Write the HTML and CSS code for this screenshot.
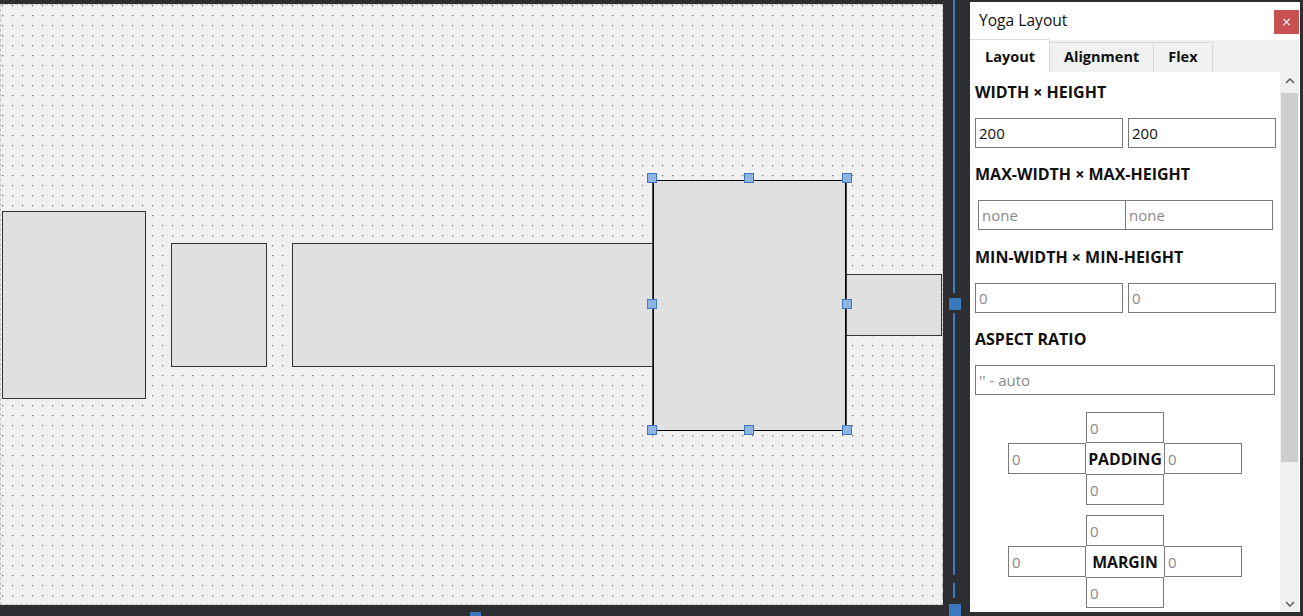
FILE: index.html
```html
<!DOCTYPE html>
<html lang="en">
<head>
<meta charset="utf-8">
<title>Yoga Layout</title>
<link rel="stylesheet" href="styles.css">
</head>
<body>
<div class="app">
  <div class="stage">
    <div class="canvas">
      <div class="node n1"></div>
      <div class="node n2"></div>
      <div class="node n3"></div>
      <div class="node n4 selected"></div>
      <div class="node n5"></div>
      <span class="grip g1"></span>
      <span class="grip g2"></span>
      <span class="grip g3"></span>
      <span class="grip g4"></span>
      <span class="grip g5"></span>
      <span class="grip g6"></span>
      <span class="grip g7"></span>
      <span class="grip g8"></span>
    </div>
    <div class="stage-handle"></div>
  </div>

  <div class="splitter">
    <div class="split-line top"></div>
    <div class="split-handle"></div>
    <div class="split-line mid"></div>
    <div class="split-line dash"></div>
    <div class="split-handle bottom"></div>
  </div>

  <aside class="panel">
    <header class="titlebar">
      <span class="title">Yoga Layout</span>
      <button class="close" type="button">×</button>
    </header>
    <nav class="tabs">
      <div class="tab active">Layout</div>
      <div class="tab">Alignment</div>
      <div class="tab">Flex</div>
    </nav>
    <div class="panel-body">
      <div class="content">
        <div class="label first">WIDTH × HEIGHT</div>
        <div class="pair">
          <input class="field" value="200">
          <input class="field" value="200">
        </div>
        <div class="label">MAX-WIDTH × MAX-HEIGHT</div>
        <div class="pair joined">
          <input class="field" placeholder="none">
          <input class="field" placeholder="none">
        </div>
        <div class="label">MIN-WIDTH × MIN-HEIGHT</div>
        <div class="pair">
          <input class="field" placeholder="0">
          <input class="field" placeholder="0">
        </div>
        <div class="label">ASPECT RATIO</div>
        <input class="field wide" placeholder="'' - auto">

        <div class="cross padding">
          <input class="field c-top" placeholder="0">
          <input class="field c-left" placeholder="0">
          <div class="c-label">PADDING</div>
          <input class="field c-right" placeholder="0">
          <input class="field c-bottom" placeholder="0">
        </div>
        <div class="cross margin">
          <input class="field c-top" placeholder="0">
          <input class="field c-left" placeholder="0">
          <div class="c-label">MARGIN</div>
          <input class="field c-right" placeholder="0">
          <input class="field c-bottom" placeholder="0">
        </div>
      </div>
      <div class="scrollbar">
        <div class="sb-btn">
          <svg width="10" height="6" viewBox="0 0 10 6"><path d="M1 5 L5 1 L9 5" fill="none" stroke="#606060" stroke-width="1.6"/></svg>
        </div>
        <div class="sb-thumb"></div>
        <div class="sb-space"></div>
        <div class="sb-btn">
          <svg width="10" height="6" viewBox="0 0 10 6"><path d="M1 1 L5 5 L9 1" fill="none" stroke="#606060" stroke-width="1.6"/></svg>
        </div>
      </div>
    </div>
  </aside>
</div>
</body>
</html>
```

FILE: styles.css
```css
* { box-sizing: border-box; }

html, body {
  margin: 0;
  padding: 0;
}

body {
  background: #2c2e31;
  font-family: "Open Sans", "Noto Sans", sans-serif;
  width: 1303px;
  height: 616px;
  overflow: hidden;
}

.app {
  display: flex;
  align-items: flex-start;
  height: 616px;
  overflow: hidden;
}

/* ---------- canvas ---------- */
.stage {
  display: flex;
  flex-direction: column;
  width: 943px;
  flex: none;
}

.canvas {
  position: relative;
  margin-top: 4px;
  width: 943px;
  height: 601px;
  background-color: #f0f0f0;
  background-image: radial-gradient(circle at 0.5px 0.5px, #7a7a7a 0.6px, rgba(122,122,122,0) 1.2px);
  background-size: 10px 10px;
  background-position: 1px 0;
  border: 1px dashed #c4c4c4;
}

.stage-handle {
  margin-top: 7px;
  margin-left: 470px;
  width: 11px;
  height: 12px;
  background: #3c78be;
}

.node {
  position: absolute;
  background: #e0e0e0;
  border: 1px solid #333333;
}

.n1 { left: 1px;   top: 206px; width: 144px; height: 188px; }
.n2 { left: 170px; top: 238px; width: 96px;  height: 124px; }
.n3 { left: 291px; top: 238px; width: 362px; height: 124px; }
.n4 { left: 652px; top: 175px; width: 193px; height: 251px; }
.n5 { left: 845px; top: 269px; width: 96px;  height: 62px; }

.node.selected {
  border: 1px solid #000;
  box-shadow: -1px 0 0 #4a4a4a, 1px 0 0 #4a4a4a;
}

.grip {
  position: absolute;
  width: 10px;
  height: 10px;
  background: #8db3e2;
  border: 1px solid #3d78bd;
}
.g1 { left: 646px; top: 168px; }
.g2 { left: 743px; top: 168px; }
.g3 { left: 841px; top: 168px; }
.g4 { left: 646px; top: 294px; }
.g5 { left: 841px; top: 294px; }
.g6 { left: 646px; top: 420px; }
.g7 { left: 743px; top: 420px; }
.g8 { left: 841px; top: 420px; }

/* ---------- splitter ---------- */
.splitter {
  width: 27px;
  height: 616px;
  flex: none;
  display: flex;
  flex-direction: column;
  align-items: flex-start;
}

.split-line {
  margin-left: 10px;
  width: 2px;
  background: #3f7bbf;
}
.split-line.top  { height: 297px; }
.split-line.mid  { margin-top: 3px; height: 266px; }
.split-line.dash { margin-top: 8px; height: 15px; }

.split-handle {
  margin-top: 5px;
  margin-left: 6px;
  width: 12px;
  height: 12px;
  background: #3c78be;
}
.split-handle.bottom { margin-top: 6px; }

/* ---------- panel ---------- */
.panel {
  margin-top: 2px;
  width: 330px;
  height: 610px;
  flex: none;
  background: #ffffff;
  display: flex;
  flex-direction: column;
}

.titlebar {
  height: 38px;
  display: flex;
  align-items: flex-start;
  justify-content: space-between;
  padding-left: 9px;
  flex: none;
}

.title {
  font-size: 15.6px;
  line-height: 20px;
  margin-top: 8px;
  color: #111;
}

.close {
  margin-top: 8px;
  margin-right: 1px;
  width: 25px;
  height: 24px;
  border: none;
  padding: 0;
  background: #c75050;
  color: #fff;
  font-family: "DejaVu Sans", sans-serif;
  font-size: 12px;
  line-height: 24px;
}

.tabs {
  height: 32px;
  flex: none;
  display: flex;
  align-items: flex-end;
  background: #f0f0f0;
  margin-right: 1px;
}

.tab {
  height: 30px;
  padding: 0 14px;
  font-weight: 700;
  font-size: 14.5px;
  line-height: 28px;
  color: #111;
  background: #f0f0f0;
  border: 1px solid #d9d9d9;
  border-bottom: none;
  border-left: none;
}

.tab.active {
  height: 33px;
  background: #fff;
  padding: 0 14px 0 15px;
  line-height: 33px;
}

.panel-body {
  flex: 1;
  display: flex;
  min-height: 0;
}

.content {
  width: 310px;
  padding: 0 5px;
  overflow: hidden;
  flex: none;
}

.label {
  height: 20px;
  line-height: 20px;
  margin: 16px 0;
  font-weight: 700;
  font-size: 16px;
  color: #111;
  white-space: nowrap;
}
.label.first { margin-top: 10px; }

.pair {
  display: flex;
  gap: 5px;
}
.pair.joined {
  gap: 0;
  padding-left: 3px;
  margin-bottom: 17px;
}
.pair.joined .field + .field { margin-left: -1px; }

.field {
  width: 148px;
  height: 30px;
  border: 1px solid #7a7a7a;
  border-radius: 0;
  padding: 0 3px;
  margin: 0;
  font-family: "Open Sans", "Noto Sans", sans-serif;
  font-size: 15px;
  color: #111;
  background: #fff;
  outline: none;
}
.field::placeholder { color: #8a8a8a; opacity: 1; }

.field.wide { width: 300px; display: block; }

.cross {
  display: grid;
  grid-template-columns: 78px 78px 78px;
  grid-template-rows: 31px 31px 31px;
  width: 234px;
  margin: 17px auto 0;
}
.cross.margin { margin-top: 10px; }

.cross .field {
  width: 78px;
  height: 31px;
}
.c-top    { grid-column: 2; grid-row: 1; }
.c-left   { grid-column: 1; grid-row: 2; }
.c-label  {
  grid-column: 2; grid-row: 2;
  display: flex;
  align-items: center;
  justify-content: center;
  font-weight: 700;
  font-size: 15.8px;
  color: #111;
}
.c-right  { grid-column: 3; grid-row: 2; }
.c-bottom { grid-column: 2; grid-row: 3; }

/* ---------- scrollbar ---------- */
.scrollbar {
  width: 19px;
  flex: none;
  background: #f0f0f0;
  display: flex;
  flex-direction: column;
  align-items: stretch;
}

.sb-btn {
  height: 17px;
  display: flex;
  align-items: center;
  justify-content: center;
  flex: none;
}

.sb-thumb {
  margin: 4px 1px 0 1px;
  height: 369px;
  background: #cdcdcd;
  flex: none;
}

.sb-space { flex: 1; }
```
